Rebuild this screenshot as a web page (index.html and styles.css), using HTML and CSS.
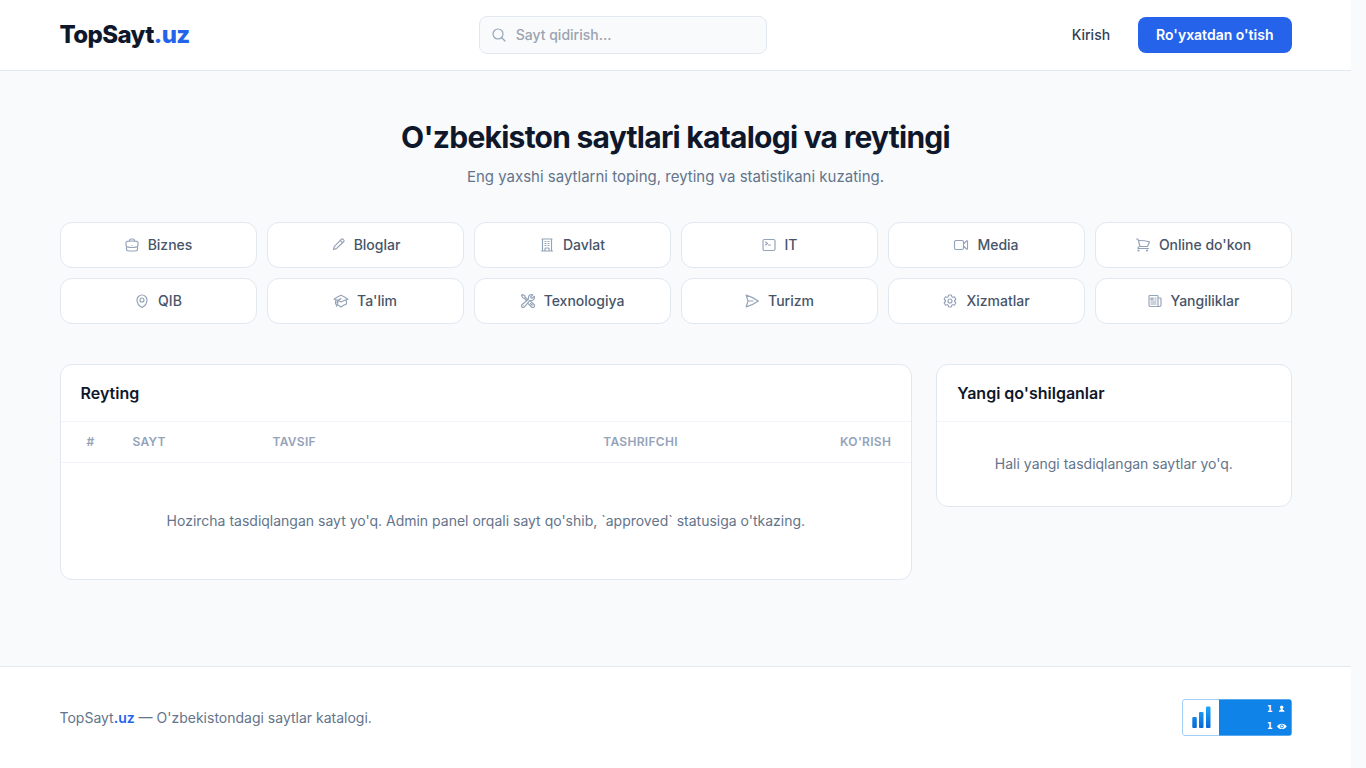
FILE: index.html
```html
<!DOCTYPE html>
<html lang="uz">
<head>
<meta charset="utf-8">
<meta name="viewport" content="width=device-width, initial-scale=1">
<title>TopSayt.uz</title>
<link rel="stylesheet" href="styles.css">
</head>
<body>
<header class="site-header">
  <div class="container header-row">
    <a class="logo" href="#">TopSayt<span class="accent">.uz</span></a>
    <form class="search" role="search">
      <svg class="icon search-icon" viewBox="0 0 24 24" aria-hidden="true"><path d="m21 21-5.197-5.197m0 0A7.5 7.5 0 1 0 5.196 5.196a7.5 7.5 0 0 0 10.607 10.607Z"/></svg>
      <input class="search-input" type="search" placeholder="Sayt qidirish..." aria-label="Sayt qidirish">
    </form>
    <nav class="nav">
      <a class="nav-link" href="#">Kirish</a>
      <a class="nav-link primary" href="#">Ro'yxatdan o'tish</a>
    </nav>
  </div>
</header>

<main class="container main">
  <section class="hero">
    <h1 class="hero-title">O'zbekiston saytlari katalogi va reytingi</h1>
    <p class="hero-text">Eng yaxshi saytlarni toping, reyting va statistikani kuzating.</p>
  </section>

  <nav class="categories">
    <a class="category" href="#"><svg class="icon" viewBox="0 0 24 24" aria-hidden="true"><path d="M20.25 14.15v4.25c0 1.094-.787 2.036-1.872 2.18-2.087.277-4.216.42-6.378.42s-4.291-.143-6.378-.42c-1.085-.144-1.872-1.086-1.872-2.18v-4.25m16.5 0a2.18 2.18 0 0 0 .75-1.661V8.706c0-1.081-.768-2.015-1.837-2.175a48.114 48.114 0 0 0-3.413-.387m4.5 8.006c-.194.165-.42.295-.673.38A23.978 23.978 0 0 1 12 15.75c-2.648 0-5.195-.429-7.577-1.22a2.016 2.016 0 0 1-.673-.38m0 0A2.18 2.18 0 0 1 3 12.489V8.706c0-1.081.768-2.015 1.837-2.175a48.111 48.111 0 0 1 3.413-.387m7.5 0V5.25A2.25 2.25 0 0 0 13.5 3h-3a2.25 2.25 0 0 0-2.25 2.25v.894m7.5 0a48.667 48.667 0 0 0-7.5 0M12 12.75h.008v.008H12v-.008Z"/></svg>Biznes</a>
    <a class="category" href="#"><svg class="icon" viewBox="0 0 24 24" aria-hidden="true"><path d="M16.862 3.487a2.1 2.1 0 0 1 2.970 0l.700.700a2.100 2.100 0 0 1 0 2.970L9.500 17.500 5.250 18.750 6.400 14.400Zm-1.500 1.500 3.400 3.400"/></svg>Bloglar</a>
    <a class="category" href="#"><svg class="icon" viewBox="0 0 24 24" aria-hidden="true"><path d="M3.75 21h16.5M4.5 3h15M5.25 3v18m13.5-18v18M9 6.75h1.5m-1.5 3h1.5m-1.5 3h1.5m3-6H15m-1.5 3H15m-1.5 3H15M9 21v-3.375c0-.621.504-1.125 1.125-1.125h3.75c.621 0 1.125.504 1.125 1.125V21"/></svg>Davlat</a>
    <a class="category" href="#"><svg class="icon" viewBox="0 0 24 24" aria-hidden="true"><path d="m6.75 7.5 3 2.25-3 2.25m4.5 0h3m-9 8.25h13.5A2.25 2.25 0 0 0 21 18V6a2.25 2.25 0 0 0-2.25-2.25H5.25A2.25 2.25 0 0 0 3 6v12a2.25 2.25 0 0 0 2.25 2.25Z"/></svg>IT</a>
    <a class="category" href="#"><svg class="icon" viewBox="0 0 24 24" aria-hidden="true"><path d="m15.75 10.5 4.72-4.72a.75.75 0 0 1 1.28.53v11.38a.75.75 0 0 1-1.28.53l-4.72-4.72M4.5 18.75h9a2.25 2.25 0 0 0 2.25-2.25v-9a2.25 2.25 0 0 0-2.25-2.25h-9A2.25 2.25 0 0 0 2.25 7.5v9a2.25 2.25 0 0 0 2.25 2.25Z"/></svg>Media</a>
    <a class="category" href="#"><svg class="icon" viewBox="0 0 24 24" aria-hidden="true"><path d="M2.25 3h1.386c.51 0 .955.343 1.087.835l.383 1.437M7.5 14.25a3 3 0 0 0-3 3h15.75m-12.75-3h11.218c1.121-2.3 2.1-4.684 2.924-7.138a60.114 60.114 0 0 0-16.536-1.84M7.5 14.25 5.106 5.272M6 20.25a.75.75 0 1 1-1.5 0 .75.75 0 0 1 1.5 0Zm12.75 0a.75.75 0 1 1-1.5 0 .75.75 0 0 1 1.5 0Z"/></svg>Online do'kon</a>
    <a class="category" href="#"><svg class="icon" viewBox="0 0 24 24" aria-hidden="true"><path d="M15 10.5a3 3 0 1 1-6 0 3 3 0 0 1 6 0Z"/><path d="M19.5 10.5c0 7.142-7.5 11.25-7.5 11.25S4.5 17.642 4.5 10.5a7.5 7.5 0 1 1 15 0Z"/></svg>QIB</a>
    <a class="category" href="#"><svg class="icon" viewBox="0 0 24 24" aria-hidden="true"><path d="M4.26 10.147a60.438 60.438 0 0 0-.491 6.347A48.62 48.62 0 0 1 12 20.904a48.62 48.62 0 0 1 8.232-4.41 60.46 60.46 0 0 0-.491-6.347m-15.482 0a50.636 50.636 0 0 0-2.658-.813A59.906 59.906 0 0 1 12 3.493a59.903 59.903 0 0 1 10.399 5.84c-.896.248-1.783.52-2.658.814m-15.482 0A50.717 50.717 0 0 1 12 13.489a50.702 50.702 0 0 1 7.74-3.342M6.75 15a.75.75 0 1 0 0-1.5.75.75 0 0 0 0 1.5Zm0 0v-3.675A55.378 55.378 0 0 1 12 8.443m-7.007 11.55A5.981 5.981 0 0 0 6.75 15.75v-1.5"/></svg>Ta'lim</a>
    <a class="category" href="#"><svg class="icon" viewBox="0 0 24 24" aria-hidden="true"><path d="M11.42 15.17 17.25 21A2.652 2.652 0 0 0 21 17.25l-5.877-5.877M11.42 15.17l2.496-3.03c.317-.384.74-.626 1.208-.766M11.42 15.17l-4.655 5.653a2.548 2.548 0 1 1-3.586-3.586l6.837-5.63m5.108-.233c.55-.164 1.163-.188 1.743-.14a4.5 4.5 0 0 0 4.486-6.336l-3.276 3.277a3.004 3.004 0 0 1-2.25-2.25l3.276-3.276a4.5 4.5 0 0 0-6.336 4.486c.091 1.076-.071 2.264-.904 2.95l-.102.085m-1.745 1.437L5.909 7.5H4.5L2.25 3.75l1.5-1.5L7.5 4.5v1.409l4.26 4.26m-1.745 1.437 1.745-1.437m6.615 8.206L15.75 15.75M4.867 19.125h.008v.008h-.008v-.008Z"/></svg>Texnologiya</a>
    <a class="category" href="#"><svg class="icon" viewBox="0 0 24 24" aria-hidden="true"><path d="M6 12 3.269 3.125A59.769 59.769 0 0 1 21.485 12 59.768 59.768 0 0 1 3.27 20.875L5.999 12Zm0 0h7.5"/></svg>Turizm</a>
    <a class="category" href="#"><svg class="icon" viewBox="0 0 24 24" aria-hidden="true"><path d="M9.594 3.94c.09-.542.56-.94 1.11-.94h2.593c.55 0 1.02.398 1.11.94l.213 1.281c.063.374.313.686.645.87.074.04.147.083.22.127.325.196.72.257 1.075.124l1.217-.456a1.125 1.125 0 0 1 1.37.49l1.296 2.247a1.125 1.125 0 0 1-.26 1.431l-1.003.827c-.293.241-.438.613-.43.992a7.723 7.723 0 0 1 0 .255c-.008.378.137.75.43.991l1.004.827c.424.35.534.955.26 1.43l-1.298 2.247a1.125 1.125 0 0 1-1.369.491l-1.217-.456c-.355-.133-.75-.072-1.076.124a6.47 6.47 0 0 1-.22.128c-.331.183-.581.495-.644.869l-.213 1.281c-.09.543-.56.94-1.11.94h-2.594c-.55 0-1.019-.398-1.11-.94l-.213-1.281c-.062-.374-.312-.686-.644-.87a6.52 6.52 0 0 1-.22-.127c-.325-.196-.72-.257-1.076-.124l-1.217.456a1.125 1.125 0 0 1-1.369-.49l-1.297-2.247a1.125 1.125 0 0 1 .26-1.431l1.004-.827c.292-.24.437-.613.43-.991a6.932 6.932 0 0 1 0-.255c.007-.38-.138-.751-.43-.992l-1.004-.827a1.125 1.125 0 0 1-.26-1.43l1.297-2.247a1.125 1.125 0 0 1 1.37-.491l1.216.456c.356.133.751.072 1.076-.124.072-.044.146-.086.22-.128.332-.183.582-.495.644-.869l.214-1.28Z"/><path d="M15 12a3 3 0 1 1-6 0 3 3 0 0 1 6 0Z"/></svg>Xizmatlar</a>
    <a class="category" href="#"><svg class="icon" viewBox="0 0 24 24" aria-hidden="true"><path d="M12 7.5h1.5m-1.5 3h1.5m-7.5 3h7.5m-7.5 3h7.5m3-9h3.375c.621 0 1.125.504 1.125 1.125V18a2.25 2.25 0 0 1-2.25 2.25M16.5 7.5V18a2.25 2.25 0 0 0 2.25 2.25M16.5 7.5V4.875c0-.621-.504-1.125-1.125-1.125H4.125C3.504 3.75 3 4.254 3 4.875V18a2.25 2.25 0 0 0 2.25 2.25h13.5M6 7.5h3v3H6v-3Z"/></svg>Yangiliklar</a>
  </nav>

  <div class="panels">
    <section class="panel">
      <h2 class="panel-title">Reyting</h2>
      <table class="rating">
        <thead>
          <tr>
            <th class="col-rank" scope="col">#</th>
            <th class="col-site" scope="col">SAYT</th>
            <th scope="col">TAVSIF</th>
            <th class="col-visitors" scope="col">TASHRIFCHI</th>
            <th class="col-views" scope="col">KO'RISH</th>
          </tr>
        </thead>
        <tbody>
          <tr><td class="rating-empty" colspan="5">Hozircha tasdiqlangan sayt yo'q. Admin panel orqali sayt qo'shib, `approved` statusiga o'tkazing.</td></tr>
        </tbody>
      </table>
    </section>
    <section class="panel">
      <h2 class="panel-title">Yangi qo'shilganlar</h2>
      <p class="panel-empty">Hali yangi tasdiqlangan saytlar yo'q.</p>
    </section>
  </div>
</main>

<footer class="site-footer">
  <div class="container footer-row">
    <p class="footer-text">TopSayt<a class="footer-link" href="#">.uz</a> — O'zbekistondagi saytlar katalogi.</p>
    <a class="counter" href="#" aria-label="Statistika">
      <svg class="counter-image" viewBox="0 0 110 37" aria-hidden="true">
        <defs>
          <linearGradient id="bars" gradientUnits="userSpaceOnUse" x1="0" y1="7" x2="0" y2="29"><stop offset="0" stop-color="#22a7f8"/><stop offset="1" stop-color="#0668d6"/></linearGradient>
        </defs>
        <rect x=".5" y=".5" width="109" height="36" rx="2.5" fill="#fff" stroke="#a3cff6"/>
        <path d="M37 .5h70a2.500 2.500 0 0 1 2.500 2.500v31a2.500 2.500 0 0 1-2.500 2.500H37z" fill="#0f83e8"/>
        <g fill="url(#bars)">
          <rect x="10.300" y="18" width="4.500" height="11" rx="1"/>
          <rect x="17" y="13" width="4.500" height="16" rx="1"/>
          <rect x="24" y="7.500" width="4.500" height="21.500" rx="1"/>
        </g>
        <g class="counter-value"><text x="85" y="13">1</text><text x="85" y="30">1</text></g>
        <g fill="#fff">
          <circle cx="99.700" cy="8.200" r="1.700"/>
          <path d="M98.700 9.500h2v1.200c1.200.3 1.800.9 1.800 2h-5.600c0-1.100.6-1.700 1.800-2z"/>
          <path d="M95 27.400c2-3.400 7.700-3.400 9.700 0-2 3.400-7.700 3.400-9.700 0z"/>
        </g>
        <circle cx="99.850" cy="27.400" r="1.500" fill="#fff" stroke="#0f83e8"/>
      </svg>
    </a>
  </div>
</footer>
</body>
</html>
```
FILE: styles.css
```css
*, *::before, *::after { box-sizing: border-box; }

body {
  margin: 0;
  padding-right: 15px;
  min-height: 100vh;
  display: flex;
  flex-direction: column;
  background: #f8fafc;
  color: #0f172a;
  font-family: Inter, "Liberation Sans", sans-serif;
  font-size: 14px;
  line-height: 20px;
}

h1, h2, p { margin: 0; }
a { color: inherit; text-decoration: none; }

.container {
  width: 100%;
  max-width: 1280px;
  margin: 0 auto;
  padding: 0 24px;
}

.icon {
  flex: none;
  width: 16px;
  height: 16px;
  fill: none;
  stroke: #94a3b8;
  stroke-width: 1.75;
  stroke-linecap: round;
  stroke-linejoin: round;
}

.site-header {
  background: #fff;
  border-bottom: 1px solid #e2e8f0;
}

.header-row {
  display: flex;
  align-items: center;
  justify-content: space-between;
  padding-top: 16px;
  padding-bottom: 16px;
}

.logo {
  font-size: 24px;
  line-height: 32px;
  font-weight: 800;
  letter-spacing: -0.025em;
}

.accent { color: #2563eb; }

.search {
  display: flex;
  align-items: center;
  gap: 9px;
  width: 288px;
  height: 38px;
  padding: 0 11px;
  background: #f8fafc;
  border: 1px solid #e2e8f0;
  border-radius: 8px;
}

.search-input {
  flex: 1;
  min-width: 0;
  padding: 0;
  border: 0;
  outline: 0;
  background: none;
  color: #0f172a;
  font: inherit;
  font-weight: 500;
}

.search-input::placeholder { color: #9ca3af; opacity: 1; }

.nav { display: flex; gap: 12px; }

.nav-link {
  padding: 8px 16px;
  border-radius: 8px;
  color: #334155;
  font-weight: 500;
}

.primary {
  padding: 8px 18px;
  background: #2563eb;
  color: #fff;
  font-weight: 600;
}

.main {
  flex: 1;
  padding-top: 48px;
  padding-bottom: 48px;
}

.hero { text-align: center; }

.hero-title {
  font-size: 30px;
  line-height: 36px;
  font-weight: 700;
  letter-spacing: -0.025em;
}

.hero-text {
  margin-top: 8px;
  color: #64748b;
  font-size: 15px;
  line-height: 27px;
}

.categories {
  display: grid;
  grid-template-columns: repeat(6, 1fr);
  gap: 10px;
  margin-top: 32px;
}

.category {
  display: flex;
  align-items: center;
  justify-content: center;
  gap: 8px;
  padding: 12px;
  background: #fff;
  border: 1px solid #e2e8f0;
  border-radius: 12px;
  color: #475569;
  font-weight: 500;
}

.panels {
  display: grid;
  grid-template-columns: 12fr 5fr;
  align-items: start;
  gap: 24px;
  margin-top: 40px;
}

.panel {
  overflow: hidden;
  background: #fff;
  border: 1px solid #e2e8f0;
  border-radius: 12px;
}

.panel-title {
  padding: 16px 20px;
  border-bottom: 1px solid #f1f5f9;
  font-size: 16px;
  line-height: 24px;
  font-weight: 600;
}

.panel-empty {
  padding: 32px 20px;
  color: #64748b;
  text-align: center;
}

.rating {
  width: 100%;
  table-layout: fixed;
  border-collapse: collapse;
}

.rating th {
  padding: 12px;
  border-bottom: 1px solid #f1f5f9;
  color: #94a3b8;
  font-size: 12px;
  line-height: 16px;
  font-weight: 600;
  letter-spacing: 0.025em;
  text-align: left;
}

.rating .col-rank { width: 60px; text-align: center; }
.col-site { width: 140px; }
.col-visitors { width: 160px; }
.rating .col-views { width: 160px; padding-right: 20px; text-align: right; }

.rating-empty {
  padding: 48px 20px;
  color: #64748b;
  text-align: center;
}

.site-footer {
  background: #fff;
  border-top: 1px solid #e2e8f0;
}

.footer-row {
  display: flex;
  align-items: center;
  justify-content: space-between;
  padding-top: 32px;
  padding-bottom: 32px;
}

.footer-text { color: #64748b; }
.footer-link { color: #2563eb; font-weight: 600; }

.counter-image {
  display: block;
  width: 110px;
  height: 37px;
}

.counter-value {
  fill: #fff;
  font-family: "DejaVu Sans", sans-serif;
  font-size: 8px;
  font-weight: 700;
}
```
